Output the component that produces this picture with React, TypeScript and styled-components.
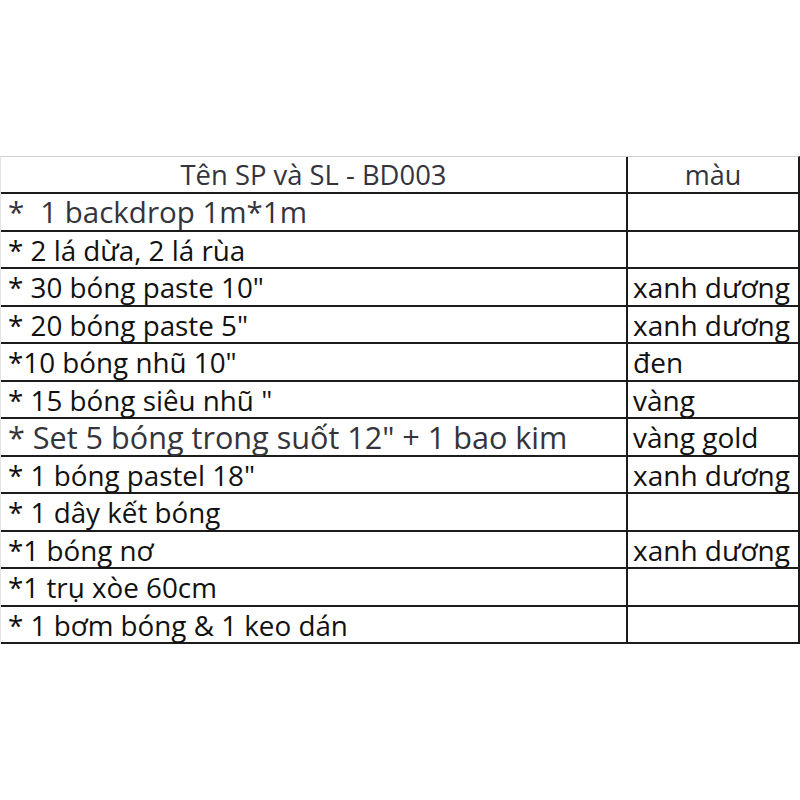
import React from "react";
import styled, { createGlobalStyle } from "styled-components";

const GlobalStyle = createGlobalStyle`
  html, body {
    margin: 0;
    padding: 0;
    background: #ffffff;
  }
  body {
    font-family: "Open Sans", "Noto Sans", sans-serif;
  }
`;

const Page = styled.div`
  width: 800px;
  height: 800px;
  padding-top: 156px;
  box-sizing: border-box;
  background: #ffffff;
`;

const Table = styled.div`
  width: 800px;
  box-sizing: border-box;
  border-top: 1px solid #cfcfcf;
  border-left: 1px solid #e2e2e2;
  border-right: 2px solid #1c1c1c;
  display: flex;
  flex-direction: column;
`;

const Row = styled.div<{ $header?: boolean }>`
  display: grid;
  grid-template-columns: 625px 1fr;
  height: ${(p) => (p.$header ? "37px" : "37.5px")};
  box-sizing: border-box;
  border-bottom: 2px solid #1c1c1c;
`;

const NameCell = styled.div<{ $size: number; $soft?: boolean; $center?: boolean }>`
  display: flex;
  align-items: center;
  justify-content: ${(p) => (p.$center ? "center" : "flex-start")};
  padding-left: ${(p) => (p.$center ? "0" : "7px")};
  white-space: pre;
  font-size: ${(p) => p.$size}px;
  color: ${(p) => (p.$soft ? "#34343c" : "#111111")};
  line-height: 1.08;
  padding-top: 1px;
`;

const Star = styled.span<{ $gap: number }>`
  margin-right: ${(p) => p.$gap}px;
`;

const ColorCell = styled.div<{ $center?: boolean }>`
  display: flex;
  align-items: center;
  justify-content: ${(p) => (p.$center ? "center" : "flex-start")};
  border-left: 2px solid #1c1c1c;
  padding-left: ${(p) => (p.$center ? "0" : "5px")};
  font-size: ${(p) => (p.$center ? "27px" : "28px")};
  color: ${(p) => (p.$center ? "#34343c" : "#111111")};
  white-space: nowrap;
  line-height: 1.08;
  padding-top: 1px;
`;

type Item = { name: string; color: string; size?: number; soft?: boolean; gap?: number };

const items: Item[] = [
  { name: "1 backdrop 1m*1m", color: "", size: 29.5, soft: true, gap: 16 },
  { name: " 2 lá dừa, 2 lá rùa", color: "" },
  { name: ' 30 bóng paste 10"', color: "xanh dương" },
  { name: ' 20 bóng paste 5"', color: "xanh dương" },
  { name: '10 bóng nhũ 10"', color: "đen" },
  { name: ' 15 bóng siêu nhũ "', color: "vàng" },
  { name: ' Set 5 bóng trong suốt 12" + 1 bao kim', color: "vàng gold", size: 30.6, soft: true },
  { name: ' 1 bóng pastel 18"', color: "xanh dương" },
  { name: " 1 dây kết bóng", color: "" },
  { name: "1 bóng nơ", color: "xanh dương" },
  { name: "1 trụ xòe 60cm", color: "" },
  { name: " 1 bơm bóng & 1 keo dán", color: "" },
];

export default function App() {
  return (
    <>
      <GlobalStyle />
      <Page>
        <Table>
          <Row $header>
            <NameCell $size={27.4} $soft $center>
              Tên SP và SL - BD003
            </NameCell>
            <ColorCell $center>màu</ColorCell>
          </Row>
          {items.map((it, i) => (
            <Row key={i}>
              <NameCell $size={it.size ?? 27.8} $soft={it.soft}>
                <Star $gap={it.gap ?? 0}>*</Star>
                {it.name}
              </NameCell>
              <ColorCell>{it.color}</ColorCell>
            </Row>
          ))}
        </Table>
      </Page>
    </>
  );
}
